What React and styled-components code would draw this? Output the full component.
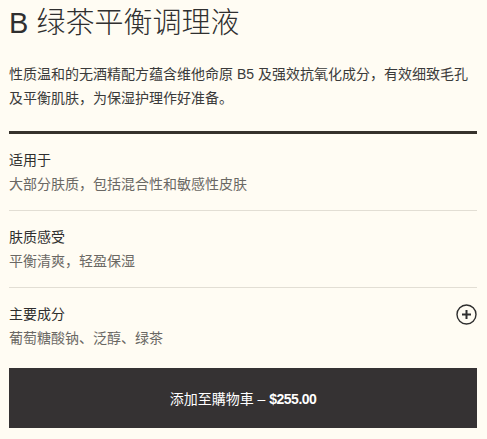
import React from 'react'
import { styled, createGlobalStyle } from 'styled-components'

const GlobalStyle = createGlobalStyle`
  html, body {
    margin: 0;
    padding: 0;
    background: #fffcf3;
  }
  body {
    font-family: "Liberation Sans", "Noto Sans CJK SC", sans-serif;
    color: #333;
  }
`

const Pagina = styled.main`
  display: flex;
  flex-direction: column;
  padding: 5px 10px 0 9px;
`

const Titulo = styled.h1`
  margin: 0;
  font-family: "Liberation Sans", "Noto Sans CJK SC", sans-serif;
  font-size: 29px;
  font-weight: 300;
  line-height: 36px;
  color: #2f2f2f;
`

const Descricao = styled.p`
  margin: 21px 0 0;
  font-size: 14px;
  line-height: 24px;
  color: #3a3a3a;
`

const Divisor = styled.hr`
  margin: ${props => props.$grosso ? '21px 0 0' : '0'};
  border: none;
  height: ${props => props.$grosso ? '3px' : '1px'};
  background: ${props => props.$grosso ? '#36322c' : '#e2ded4'};
`

const Secao = styled.section`
  display: flex;
  justify-content: space-between;
  align-items: flex-start;
  padding: 14px 0 ${props => props.$ultima ? '18px' : '14px'};
`

const Conteudo = styled.div`
  display: flex;
  flex-direction: column;
`

const Rotulo = styled.h3`
  margin: 0;
  font-size: 14px;
  font-weight: 400;
  line-height: 24px;
  color: #2e2e2e;
`

const Valor = styled.p`
  margin: 0;
  font-size: 14px;
  line-height: 24px;
  color: #6a6864;
`

const BotaoIcone = styled.button`
  display: flex;
  background: none;
  border: none;
  padding: 0;
  margin: 2px 0 0;
  color: #2e2e2e;
  cursor: pointer;
`

const BotaoCarrinho = styled.button`
  height: 60px;
  border: none;
  background: #353233;
  color: #fff;
  font-family: "Liberation Sans", "Noto Sans CJK SC", sans-serif;
  font-size: 14px;
  cursor: pointer;
`

const Preco = styled.strong`
  font-weight: 700;
  letter-spacing: -0.5px;
`

const IconeMais = () => (
  <svg width="21" height="21" viewBox="0 0 21 21" fill="none" stroke="currentColor">
    <circle cx="10.5" cy="10.5" r="9.5" strokeWidth="1.4" />
    <path d="M10.5 6v9M6 10.5h9" strokeWidth="2" />
  </svg>
)

const secoes = [
  { rotulo: '适用于', valor: '大部分肤质，包括混合性和敏感性皮肤' },
  { rotulo: '肤质感受', valor: '平衡清爽，轻盈保湿' },
  { rotulo: '主要成分', valor: '葡萄糖酸钠、泛醇、绿茶', expansivel: true },
]

const App = () => {
  return (
    <>
      <GlobalStyle />
      <Pagina>
        <Titulo>B 绿茶平衡调理液</Titulo>
        <Descricao>
          性质温和的无酒精配方蕴含维他命原 B5 及强效抗氧化成分，有效细致毛孔及平衡肌肤，为保湿护理作好准备。
        </Descricao>
        <Divisor $grosso />
        {secoes.map((secao, i) => (
          <React.Fragment key={secao.rotulo}>
            {i > 0 && <Divisor />}
            <Secao $ultima={i === secoes.length - 1}>
              <Conteudo>
                <Rotulo>{secao.rotulo}</Rotulo>
                <Valor>{secao.valor}</Valor>
              </Conteudo>
              {secao.expansivel && (
                <BotaoIcone aria-label="展开">
                  <IconeMais />
                </BotaoIcone>
              )}
            </Secao>
          </React.Fragment>
        ))}
        <BotaoCarrinho>
          添加至購物車 – <Preco>$255.00</Preco>
        </BotaoCarrinho>
      </Pagina>
    </>
  )
}

export default App
